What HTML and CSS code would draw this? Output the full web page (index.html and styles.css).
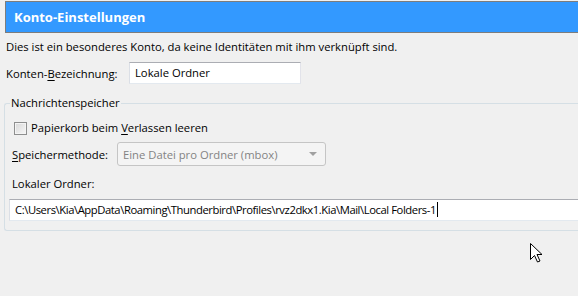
FILE: index.html
```html
<!DOCTYPE html>
<html lang="de">
<head>
    <meta charset="UTF-8">
    <title>Konto-Einstellungen</title>
    <link rel="stylesheet" href="styles.css">
</head>
<body>
    <div class="header">Konto-Einstellungen</div>

    <p class="info">Dies ist ein besonderes Konto, da keine Identitäten mit ihm verknüpft sind.</p>

    <div class="row">
        <label class="row-label">Konten-<u>B</u>ezeichnung:</label>
        <div class="textbox name-box">Lokale Ordner</div>
    </div>

    <fieldset class="store">
        <legend>Nachrichtenspeicher</legend>

        <div class="check-row">
            <span class="checkbox"></span>
            <span>Papierkorb beim <u>V</u>erlassen leeren</span>
        </div>

        <div class="select-row">
            <label class="row-label"><u>S</u>peichermethode:</label>
            <div class="select">
                <span>Eine Datei pro Ordner (mbox)</span>
                <span class="arrow"></span>
            </div>
        </div>

        <div class="folder-label">Lokaler Ordner:</div>
        <div class="textbox path-box">C:\Users\Kia\AppData\Roaming\Thunderbird\Profiles\rvz2dkx1.Kia\Mail\Local Folders-1<span class="caret"></span></div>
    </fieldset>

    <!-- Mauszeiger -->
    <svg class="pointer" width="13" height="20" viewBox="0 0 13 20">
        <path d="M0.5 0.5 L0.5 16.5 L4.5 12.5 L7.5 19 L10 18 L7 11.5 L12 11.5 Z" fill="#fff" stroke="#000" stroke-width="1" stroke-linejoin="miter"/>
    </svg>
</body>
</html>
```

FILE: styles.css
```css
html, body {
    margin: 0;
    padding: 0;
    overflow: hidden;
}
body {
    width: 578px;
    height: 296px;
    background: #f0f0f0;
    font-family: 'Open Sans', sans-serif;
    font-size: 11.25px;
    color: #000;
    position: relative;
}
u {
    text-decoration: underline;
    text-underline-offset: 2px;
}
.header {
    margin: 1px 0 0 5px;
    height: 30px;
    line-height: 30px;
    padding-left: 8px;
    background: #3399ff;
    border: 1px solid #7d7d7d;
    border-right: none;
    color: white;
    font-weight: bold;
    font-size: 13px;
}
.info {
    margin: 6px 0 0 6px;
    line-height: 16px;
}
.row {
    display: flex;
    align-items: center;
    margin: 7px 0 0 6px;
}
.row-label {
    width: 123px;
}
.textbox {
    box-sizing: border-box;
    height: 22px;
    line-height: 20px;
    padding-left: 5px;
    background: white;
    border: 1px solid;
    border-color: #abadb3 #e2e3ea #e3e9ef #dbdfe6;
    white-space: nowrap;
}
.name-box {
    width: 172px;
}
.store {
    margin: 11px 0 0 4px;
    padding: 0 0 9px 0;
    border: 1px solid #d5dfe5;
    border-right: none;
    border-radius: 3px 0 0 3px;
}
.store legend {
    margin-left: 5px;
    padding: 0 1px;
    line-height: 16px;
}
.check-row {
    display: flex;
    align-items: center;
    gap: 4px;
    margin: 9px 0 0 9px;
    line-height: 16px;
}
.checkbox {
    box-sizing: border-box;
    width: 13px;
    height: 13px;
    border: 1px solid #8e8f8f;
    background: linear-gradient(135deg, #d8d8d8, #f7f7f7);
    box-shadow: inset 0 0 0 1px #f4f4f4;
}
.select-row {
    display: flex;
    align-items: center;
    margin: 6px 0 0 7px;
}
.select-row .row-label {
    width: 105px;
}
.select {
    box-sizing: border-box;
    width: 209px;
    height: 24px;
    display: flex;
    align-items: center;
    justify-content: space-between;
    padding: 0 8px 0 5px;
    border: 1px solid #c5c5c5;
    border-radius: 3px;
    background: #f4f4f4;
    color: #838383;
}
.arrow {
    width: 0;
    height: 0;
    border-left: 4px solid transparent;
    border-right: 4px solid transparent;
    border-top: 4px solid #a0a0a0;
}
.folder-label {
    margin: 10px 0 0 7px;
    line-height: 16px;
}
.path-box {
    margin: 7px 0 0 4px;
    height: 22px;
    border-right: none;
    letter-spacing: -0.43px;
}
.caret {
    display: inline-block;
    width: 1px;
    height: 15px;
    background: #000;
    vertical-align: -3px;
    margin-left: 1px;
}
.pointer {
    position: absolute;
    left: 530px;
    top: 243px;
}
```
